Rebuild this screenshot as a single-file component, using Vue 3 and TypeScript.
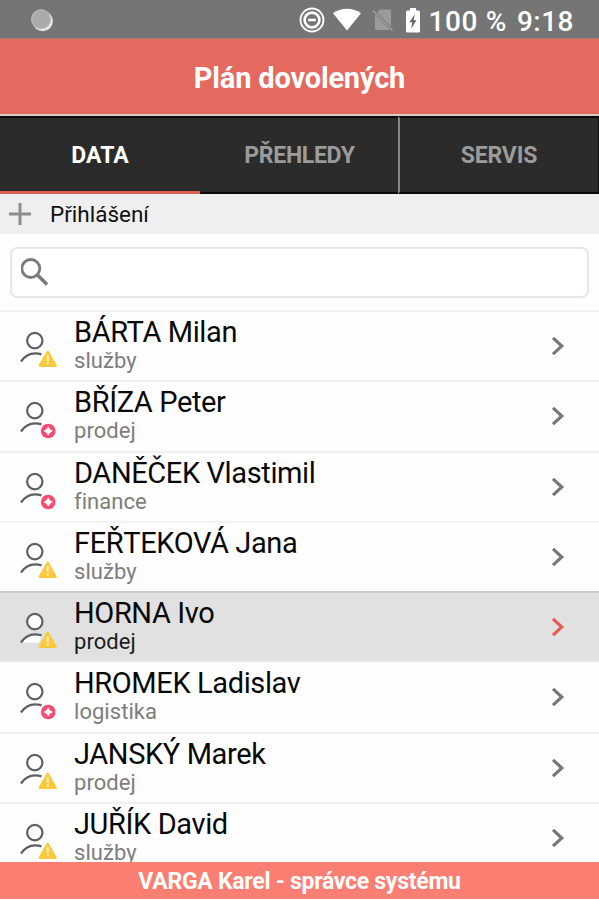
<script setup lang="ts">
import { ref } from 'vue'

type Badge = 'warning' | 'plus'

interface Employee {
  name: string
  department: string
  badge: Badge
}

const tabs: string[] = ['DATA', 'PŘEHLEDY', 'SERVIS']
const activeTab = ref<number>(0)
const selected = ref<number>(4)

const employees: Employee[] = [
  { name: 'BÁRTA Milan', department: 'služby', badge: 'warning' },
  { name: 'BŘÍZA Peter', department: 'prodej', badge: 'plus' },
  { name: 'DANĚČEK Vlastimil', department: 'finance', badge: 'plus' },
  { name: 'FEŘTEKOVÁ Jana', department: 'služby', badge: 'warning' },
  { name: 'HORNA Ivo', department: 'prodej', badge: 'warning' },
  { name: 'HROMEK Ladislav', department: 'logistika', badge: 'plus' },
  { name: 'JANSKÝ Marek', department: 'prodej', badge: 'warning' },
  { name: 'JUŘÍK David', department: 'služby', badge: 'warning' },
]
</script>

<template>
  <div class="screen">
    <div class="status">
      <svg class="notice" width="24" height="24" viewBox="0 0 24 24">
        <circle cx="12.700" cy="13" r="10.200" fill="#e8e8e8" />
        <circle cx="11" cy="11.200" r="10" fill="#aaa" />
        <circle cx="11" cy="11.200" r="9.300" fill="none" stroke="#bcbcbc" />
      </svg>
      <div class="indicators">
        <svg class="dnd" width="26" height="26" viewBox="0 0 26 26" fill="none" stroke="#fff">
          <circle cx="13" cy="13" r="11.500" stroke-width="1.800" />
          <circle cx="13" cy="13" r="7.400" stroke-width="2.600" />
          <path d="M9.200 13h7.600" stroke-width="2.600" />
        </svg>
        <svg class="wifi" width="28" height="24" viewBox="0 0 28 24">
          <path d="M0 5.300C8-.900 20-.900 28 5.300L14 22.500z" fill="#fff" />
        </svg>
        <svg class="sim" width="22" height="24" viewBox="0 0 22 24">
          <path d="M8 1.500h9.500q1.500 0 1.500 1.500v15.800L5.200 4.500zM3 6.500L18 22H4.500Q3 22 3 20.500z" fill="#9b9b9b" />
          <path d="M1 2.700L20.500 22.700" stroke="#9b9b9b" stroke-width="1.700" />
        </svg>
        <svg class="battery" width="14" height="25" viewBox="0 0 14 25">
          <path d="M4 0h6v2.500h2.500Q14 2.500 14 4v19q0 1.500-1.500 1.500h-11Q0 24.500 0 23V4Q0 2.500 1.500 2.500H4z" fill="#fff" />
          <path d="M8.800 6L3.500 14.300h2.800L5.200 20.500l5.300-8.300H7.600z" fill="#666" />
        </svg>
        <span class="level">100 %</span>
        <span class="clock">9:18</span>
      </div>
    </div>

    <header class="header">Plán dovolených</header>

    <nav class="tabs">
      <button
        v-for="(tab, i) in tabs"
        :key="tab"
        class="tab"
        :class="{ active: i === activeTab }"
        @click="activeTab = i"
      >{{ tab }}</button>
    </nav>

    <div class="login">
      <svg width="22" height="22" viewBox="0 0 22 22">
        <path d="M0 11h22M11 0v22" stroke="#8e8e8e" stroke-width="3" />
      </svg>
      <span>Přihlášení</span>
    </div>

    <div class="search">
      <div class="field">
        <svg width="28" height="28" viewBox="0 0 28 28" fill="none" stroke="#7a7a7a">
          <circle cx="9.800" cy="10.500" r="9" stroke-width="2.800" />
          <path d="M16.500 17L26 26.500" stroke-width="3.600" />
        </svg>
      </div>
    </div>

    <ul class="list">
      <li
        v-for="(person, i) in employees"
        :key="person.name"
        class="row"
        :class="{ selected: i === selected }"
        @click="selected = i"
      >
        <svg class="avatar" width="38" height="38" viewBox="0 0 38 38">
          <path d="M1 30.500C5 24.500 9.500 22.300 15 22.300q3.500 0 6.500 1.200L19 30.500z" fill="#fff" />
          <circle cx="14.800" cy="9.600" r="7.700" fill="#fff" stroke="#5c6065" stroke-width="2.200" />
          <path d="M1 30.500C5 24.500 9.500 22.300 15 22.300q3.500 0 6.500 1" fill="none" stroke="#5c6065" stroke-width="2.300" />
          <template v-if="person.badge === 'warning'">
            <path d="M27.700 20.600L35.800 34.800H19.600z" fill="#fcc83c" stroke="#fcc83c" stroke-width="2.200" stroke-linejoin="round" />
            <path d="M27.700 24v6M27.700 31.500v2" stroke="#fff4d5" stroke-width="1.900" />
          </template>
          <template v-else>
            <circle cx="28.200" cy="30" r="7.300" fill="#f94a72" />
            <path d="M28.200 25.800L29.800 28.400L32.400 30L29.800 31.600L28.200 34.200L26.600 31.600L24 30L26.600 28.400z" fill="#fff" stroke="#fff" stroke-width=".6" />
          </template>
        </svg>
        <div class="text">
          <div class="name">{{ person.name }}</div>
          <div class="department">{{ person.department }}</div>
        </div>
        <svg class="chevron" width="14" height="20" viewBox="0 0 14 20">
          <path d="M2 1.800L10.800 10L2 18.200" fill="none" stroke="currentColor" stroke-width="3.200" />
        </svg>
      </li>
    </ul>

    <footer class="footer">VARGA Karel - správce systému</footer>
  </div>
</template>

<style>
body {
  background: #fff;
}
</style>

<style scoped>
.screen {
  display: flex;
  flex-direction: column;
  box-sizing: border-box;
  width: 599px;
  height: 900px;
  overflow: hidden;
  padding-bottom: 1px;
  background: #fefefe;
  font-family: Roboto, sans-serif;
  color: #111;
}
.status {
  flex: none;
  display: flex;
  justify-content: space-between;
  height: 39px;
  box-sizing: border-box;
  padding: 0 25px 0 30px;
  background: #757575;
  color: #fff;
  border-bottom: 1px solid #a87d79;
}
.notice {
  margin-top: 8px;
}
.indicators {
  display: flex;
  align-items: center;
  padding-top: 2px;
}
.wifi {
  margin-left: 8px;
}
.sim {
  margin-left: 11px;
}
.battery {
  margin-left: 12px;
}
.level,
.clock {
  padding-top: 3px;
  font-size: 28px;
  font-weight: 500;
  line-height: 34px;
  white-space: nowrap;
}
.level {
  margin-left: 9px;
  letter-spacing: 0.6px;
}
.clock {
  margin-left: 10px;
  letter-spacing: 0.5px;
}
.header {
  flex: none;
  height: 75px;
  line-height: 79px;
  text-align: center;
  font-size: 29px;
  letter-spacing: -0.18px;
  font-weight: 700;
  color: #fff;
  background: #e46a5f;
}
.tabs {
  flex: none;
  display: grid;
  grid-template-columns: 200px 198px 201px;
  box-sizing: border-box;
  height: 80px;
  border-top: 2px solid #dccbc9;
  background: #2b2b2b;
}
.tab {
  box-sizing: border-box;
  border: 0;
  border-top: 2px solid #0b0b0b;
  border-bottom: 2px solid #0b0b0b;
  padding: 1px 0 0 1px;
  background: #2b2b2b;
  color: #9b9b9b;
  font: 700 23px/70px Roboto, sans-serif;
  letter-spacing: -0.3px;
}
.tab.active {
  color: #fff;
  border-bottom: 3px solid #dc5f50;
  padding: 2px 0 0;
  letter-spacing: 0;
}
.tab:last-child {
  border-left: 2px solid #858585;
  border-right: 1px solid #0b0b0b;
  padding-left: 0;
  letter-spacing: -0.2px;
}
.login {
  flex: none;
  display: flex;
  align-items: center;
  gap: 19px;
  height: 40px;
  padding-left: 9px;
  background: #efefef;
  font-size: 22.5px;
}
.search {
  flex: none;
  box-sizing: border-box;
  height: 76px;
  padding: 13px 10px 12px;
}
.field {
  box-sizing: border-box;
  height: 51px;
  padding: 9px;
  border: 2px solid #e7e7e7;
  border-radius: 7px;
  background: #fff;
}
.field svg {
  display: block;
}
.list {
  flex: 1;
  min-height: 0;
  overflow: hidden;
  margin: 0;
  padding: 0;
  list-style: none;
}
.row {
  display: flex;
  box-sizing: border-box;
  height: 70.25px;
  padding: 0 34px 0 20px;
  border-top: 2px solid #f1f1f1;
}
.row.selected {
  background: #e1e1e1;
  border-top-color: #c9c9c9;
}
.avatar {
  flex: none;
  margin-top: 19px;
}
.text {
  flex: 1;
  padding-left: 16px;
}
.name {
  padding-top: 3px;
  font-size: 29px;
  line-height: 34px;
  letter-spacing: -0.38px;
  white-space: nowrap;
  color: #080808;
}
.department {
  font-size: 22px;
  line-height: 24px;
  letter-spacing: 0.04px;
  font-variant-ligatures: none;
  color: #7d7d7d;
}
.selected .department {
  color: #1c1c1c;
}
.chevron {
  flex: none;
  margin-top: 24px;
  color: #777;
}
.selected .chevron {
  color: #e25e50;
}
.footer {
  flex: none;
  height: 37px;
  line-height: 39px;
  text-align: center;
  font-size: 23px;
  letter-spacing: -0.27px;
  font-weight: 700;
  color: #fff;
  background: #fb7e73;
}
</style>
